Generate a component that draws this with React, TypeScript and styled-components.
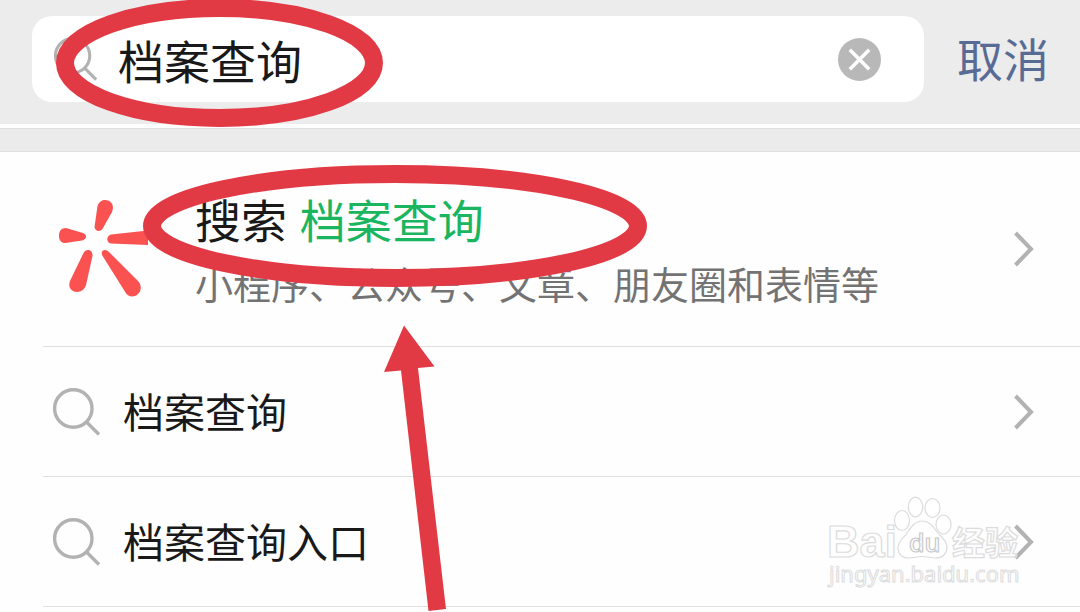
import React from "react";
import styled, { createGlobalStyle } from "styled-components";

const GlobalStyle = createGlobalStyle`
  * { box-sizing: border-box; }
  body {
    margin: 0;
    background: #fefefe;
    color: #191919;
    font-family: "Liberation Sans", "Noto Sans CJK SC", sans-serif;
  }
`;

const Page = styled.div`
  position: relative;
  min-height: 100vh;
  overflow: hidden;
`;

const Header = styled.header`
  display: flex;
  align-items: center;
  gap: 33px;
  padding: 16px 31px 22px 32px;
  background: #ececec;
`;

const SearchBox = styled.label`
  flex: 1;
  min-width: 0;
  height: 86px;
  display: flex;
  align-items: center;
  gap: 20px;
  padding: 0 43px 0 22px;
  border-radius: 20px;
  background: #fff;
`;

const SearchInput = styled.input`
  flex: 1;
  min-width: 0;
  height: 68px;
  padding: 0;
  border: 0;
  outline: 0;
  background: transparent;
  color: #191919;
  font: inherit;
  font-size: 46px;
`;

const PlainButton = styled.button`
  flex: none;
  display: flex;
  padding: 0;
  border: 0;
  background: none;
  cursor: pointer;
`;

const CancelButton = styled(PlainButton)`
  padding-top: 4px;
  color: #576b95;
  font: inherit;
  font-size: 46px;
  line-height: 60px;
`;

const Divider = styled.div`
  height: 24px;
  margin-top: 4px;
  border: solid #e0e0e0;
  border-width: 1px 0;
  background: #ebebeb;
`;

const List = styled.ul`
  margin: 0;
  padding: 0 0 0 43px;
  list-style: none;
`;

const Item = styled.li`
  border-bottom: 1px solid #dedede;
`;

const RowLink = styled.a<{ $tall?: boolean }>`
  display: flex;
  align-items: center;
  gap: ${(p) => (p.$tall ? 40 : 22)}px;
  height: ${(p) => (p.$tall ? 194 : 129)}px;
  padding: 0 46px 0 ${(p) => (p.$tall ? 12 : 10)}px;
  color: inherit;
  text-decoration: none;
`;

const Label = styled.span`
  flex: 1;
  padding-top: 4px;
  font-size: 41px;
  line-height: 56px;
`;

const Texts = styled.span`
  flex: 1;
  display: flex;
  flex-direction: column;
  gap: 10px;
  padding-top: 4px;
`;

const Title = styled.span`
  font-size: 46px;
  line-height: 60px;
`;

const Keyword = styled.span`
  color: #1ab65f;
`;

const Summary = styled.span`
  color: #737373;
  font-size: 38px;
  line-height: 48px;
  white-space: nowrap;
`;

const Icon = styled.svg`
  flex: none;
  display: block;
`;

const Marks = styled.svg`
  position: absolute;
  top: 0;
  left: 0;
  pointer-events: none;
`;

const Watermark = styled.svg`
  position: absolute;
  right: 52px;
  top: 490px;
  pointer-events: none;
`;

const SearchIcon = ({ size }: { size: number }) => (
  <Icon width={size} height={size} viewBox="0 0 48 48" fill="none" stroke="#b2b2b2" strokeWidth="3.4" aria-hidden="true">
    <circle cx="20.3" cy="20.5" r="18.7" />
    <path d="M33.5 34 46 46.5" />
  </Icon>
);

const Chevron = () => (
  <Icon width="20" height="36" viewBox="0 0 20 36" fill="none" stroke="#b2b2b2" strokeWidth="4" aria-hidden="true">
    <path d="M1.5 2 17 18 1.5 34" />
  </Icon>
);

const SparkLogo = () => (
  <Icon width="100" height="104" viewBox="55 197 100 104" fill="#fa5151" aria-hidden="true">
    <path d="M97.500 206C99.500 200.500 104 199 108 200.500C113 202.500 114 207 112 212L103 228C101 232 95.500 232.500 94.500 227Z" />
    <path d="M66 228C61 228 59 231.500 59 236C59 241 62 243.800 67 242.800L82 240.500C87 239.500 87.500 234.500 83 233Z" />
    <path d="M111 234.500C106 236 106 242.500 111 243.500L148 245V230.500Z" />
    <path d="M83 254C85 248.500 93 248.500 92.500 256L86 285C84 291 79 293 74 291.500C69 289.500 68.500 285 70 281Z" />
    <path d="M102 255C100.500 249.500 106 248.500 109 252L138 281C142 285.500 141.500 291 137.500 294.500C133 298 128 296.500 125.500 292.500Z" />
  </Icon>
);

const suggestions = ["档案查询", "档案查询入口"];

export default function App() {
  return (
    <Page>
      <GlobalStyle />
      <Header>
        <SearchBox>
          <SearchIcon size={44} />
          <SearchInput type="text" aria-label="搜索" defaultValue="档案查询" />
          <PlainButton type="button" aria-label="清除">
            <Icon width="43" height="43" viewBox="0 0 43 43">
              <circle cx="21.500" cy="21.500" r="21.500" fill="#b8b8b8" />
              <path d="M11.800 11.800 31.200 31.200M31.200 11.800 11.800 31.200" stroke="#fff" strokeWidth="3.600" />
            </Icon>
          </PlainButton>
        </SearchBox>
        <CancelButton type="button">取消</CancelButton>
      </Header>
      <Divider />
      <List>
        <Item>
          <RowLink href="#search" $tall>
            <SparkLogo />
            <Texts>
              <Title>
                搜索 <Keyword>档案查询</Keyword>
              </Title>
              <Summary>小程序、公众号、文章、朋友圈和表情等</Summary>
            </Texts>
            <Chevron />
          </RowLink>
        </Item>
        {suggestions.map((text) => (
          <Item key={text}>
            <RowLink href="#suggestion">
              <SearchIcon size={48} />
              <Label>{text}</Label>
              <Chevron />
            </RowLink>
          </Item>
        ))}
      </List>
      <Watermark width="204" height="104" viewBox="824 490 204 104" fill="#fff" fillOpacity="0.5" stroke="#dcdcdc" strokeWidth="1.2">
        <text x="827" y="557" fontSize="45" fontWeight="700" fontFamily="Liberation Sans, sans-serif">Bai</text>
        <ellipse cx="902" cy="520.500" rx="7.500" ry="10" />
        <ellipse cx="915.500" cy="507" rx="7.200" ry="9.800" />
        <ellipse cx="932.500" cy="508" rx="7.500" ry="9.500" />
        <ellipse cx="943.500" cy="524.500" rx="7.500" ry="9.500" />
        <path d="M922 521C915 521 911 527 907 533C903 539 898 541 898 548C898 554 902 558 909 558C914 558 917 556.500 922 556.500C927 556.500 931 558 936 558C943 558 947 553 947 547C947 540 941 537 937 532C933 526 929 521 922 521Z" />
        <text x="909" y="552" fontSize="25" fontWeight="600" fontFamily="Open Sans, sans-serif" stroke="#c8c8c8">du</text>
        <text x="952" y="555" fontSize="33" fontWeight="700" fontFamily="Noto Sans CJK SC, sans-serif">经验</text>
        <text x="829" y="582" fontSize="22" fontFamily="Noto Sans, sans-serif" strokeWidth="1">jingyan.baidu.com</text>
      </Watermark>
      <Marks width="660" height="612" viewBox="0 0 660 612" fill="none" stroke="#e23a45" strokeWidth="18" aria-hidden="true">
        <ellipse cx="219.500" cy="63" rx="154.500" ry="55" />
        <ellipse cx="395" cy="226" rx="243" ry="52" />
        <path d="M404 325.500 434.500 366.500 418 368 446 609 428.500 611 401 370.500 384 372Z" fill="#e23a45" stroke="none" />
      </Marks>
    </Page>
  );
}
